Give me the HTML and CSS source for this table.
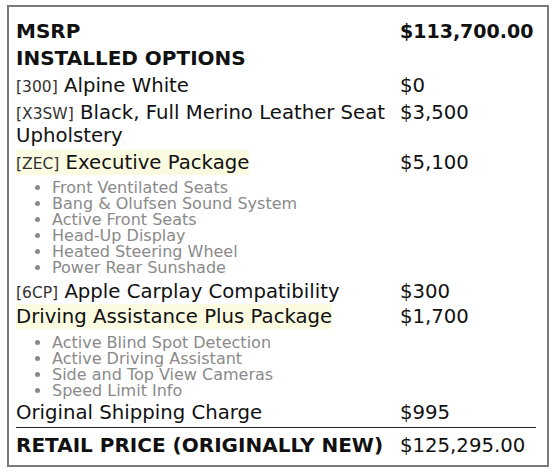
FILE: index.html
```html
<!DOCTYPE html>
<html>
<head>
<meta charset="utf-8">
<link rel="stylesheet" href="styles.css">
</head>
<body>
<div class="sticker">
  <table class="price-table">
    <colgroup><col class="col-label"><col class="col-price"></colgroup>
    <tr class="row bold">
      <td>MSRP</td><td class="big-price">$113,700.00</td>
    </tr>
    <tr class="row bold">
      <td colspan="2">INSTALLED OPTIONS</td>
    </tr>
    <tr class="row">
      <td><span class="code">[300]</span> Alpine White</td><td>$0</td>
    </tr>
    <tr class="row">
      <td><span class="code">[X3SW]</span> Black, Full Merino Leather Seat Upholstery</td><td>$3,500</td>
    </tr>
    <tr class="row">
      <td><span class="hl"><span class="code">[ZEC]</span> Executive Package</span></td><td>$5,100</td>
    </tr>
    <tr class="sub">
      <td colspan="2">
        <ul class="features">
          <li>Front Ventilated Seats</li>
          <li>Bang &amp; Olufsen Sound System</li>
          <li>Active Front Seats</li>
          <li>Head-Up Display</li>
          <li>Heated Steering Wheel</li>
          <li>Power Rear Sunshade</li>
        </ul>
      </td>
    </tr>
    <tr class="row row-tight">
      <td><span class="code">[6CP]</span> Apple Carplay Compatibility</td><td>$300</td>
    </tr>
    <tr class="row">
      <td><span class="hl">Driving Assistance Plus Package</span></td><td>$1,700</td>
    </tr>
    <tr class="sub sub-last">
      <td colspan="2">
        <ul class="features">
          <li>Active Blind Spot Detection</li>
          <li>Active Driving Assistant</li>
          <li>Side and Top View Cameras</li>
          <li>Speed Limit Info</li>
        </ul>
      </td>
    </tr>
    <tr class="row row-before-total">
      <td>Original Shipping Charge</td><td>$995</td>
    </tr>
    <tr class="row total">
      <td class="bold-cell">RETAIL PRICE (ORIGINALLY NEW)</td><td>$125,295.00</td>
    </tr>
  </table>
</div>
</body>
</html>
```

FILE: styles.css
```css
html, body {
  margin: 0;
  padding: 0;
  background: #ffffff;
}

body {
  font-family: "DejaVu Sans", sans-serif;
  color: #111;
}

.sticker {
  margin: 5px 0 0 7px;
  border: 2px solid #7a7a7a;
  padding: 11px 0 6px 7px;
  box-sizing: content-box;
  width: 531px;
}

.price-table {
  border-collapse: collapse;
  table-layout: fixed;
  width: 520px;
}

.col-label { width: 384px; }
.col-price { width: 136px; }

.row td {
  font-size: 19.7px;
  line-height: 23px;
  padding: 2px 0;
  vertical-align: top;
}

.bold td, .bold-cell {
  font-weight: bold;
}

.row .bold-cell,
.bold td {
  font-size: 20px;
}

.row td.big-price {
  font-size: 19px;
}

.code {
  font-size: 15.5px;
  line-height: 1;
  color: #333;
}

.hl {
  background: #fbfbe2;
  padding: 1px 0;
}

.row-tight td {
  padding-bottom: 0;
}

.sub td {
  padding: 4px 0 2px 0;
}

.sub-last td {
  padding: 5px 0 0 0;
}

.features {
  margin: 0;
  padding: 0 0 0 36px;
  font-size: 16px;
  line-height: 16px;
  color: #8a8a8a;
}

.row-before-total td {
  padding-bottom: 3px;
}

.total td {
  border-top: 1px solid #222;
  padding-top: 6px;
}
```
